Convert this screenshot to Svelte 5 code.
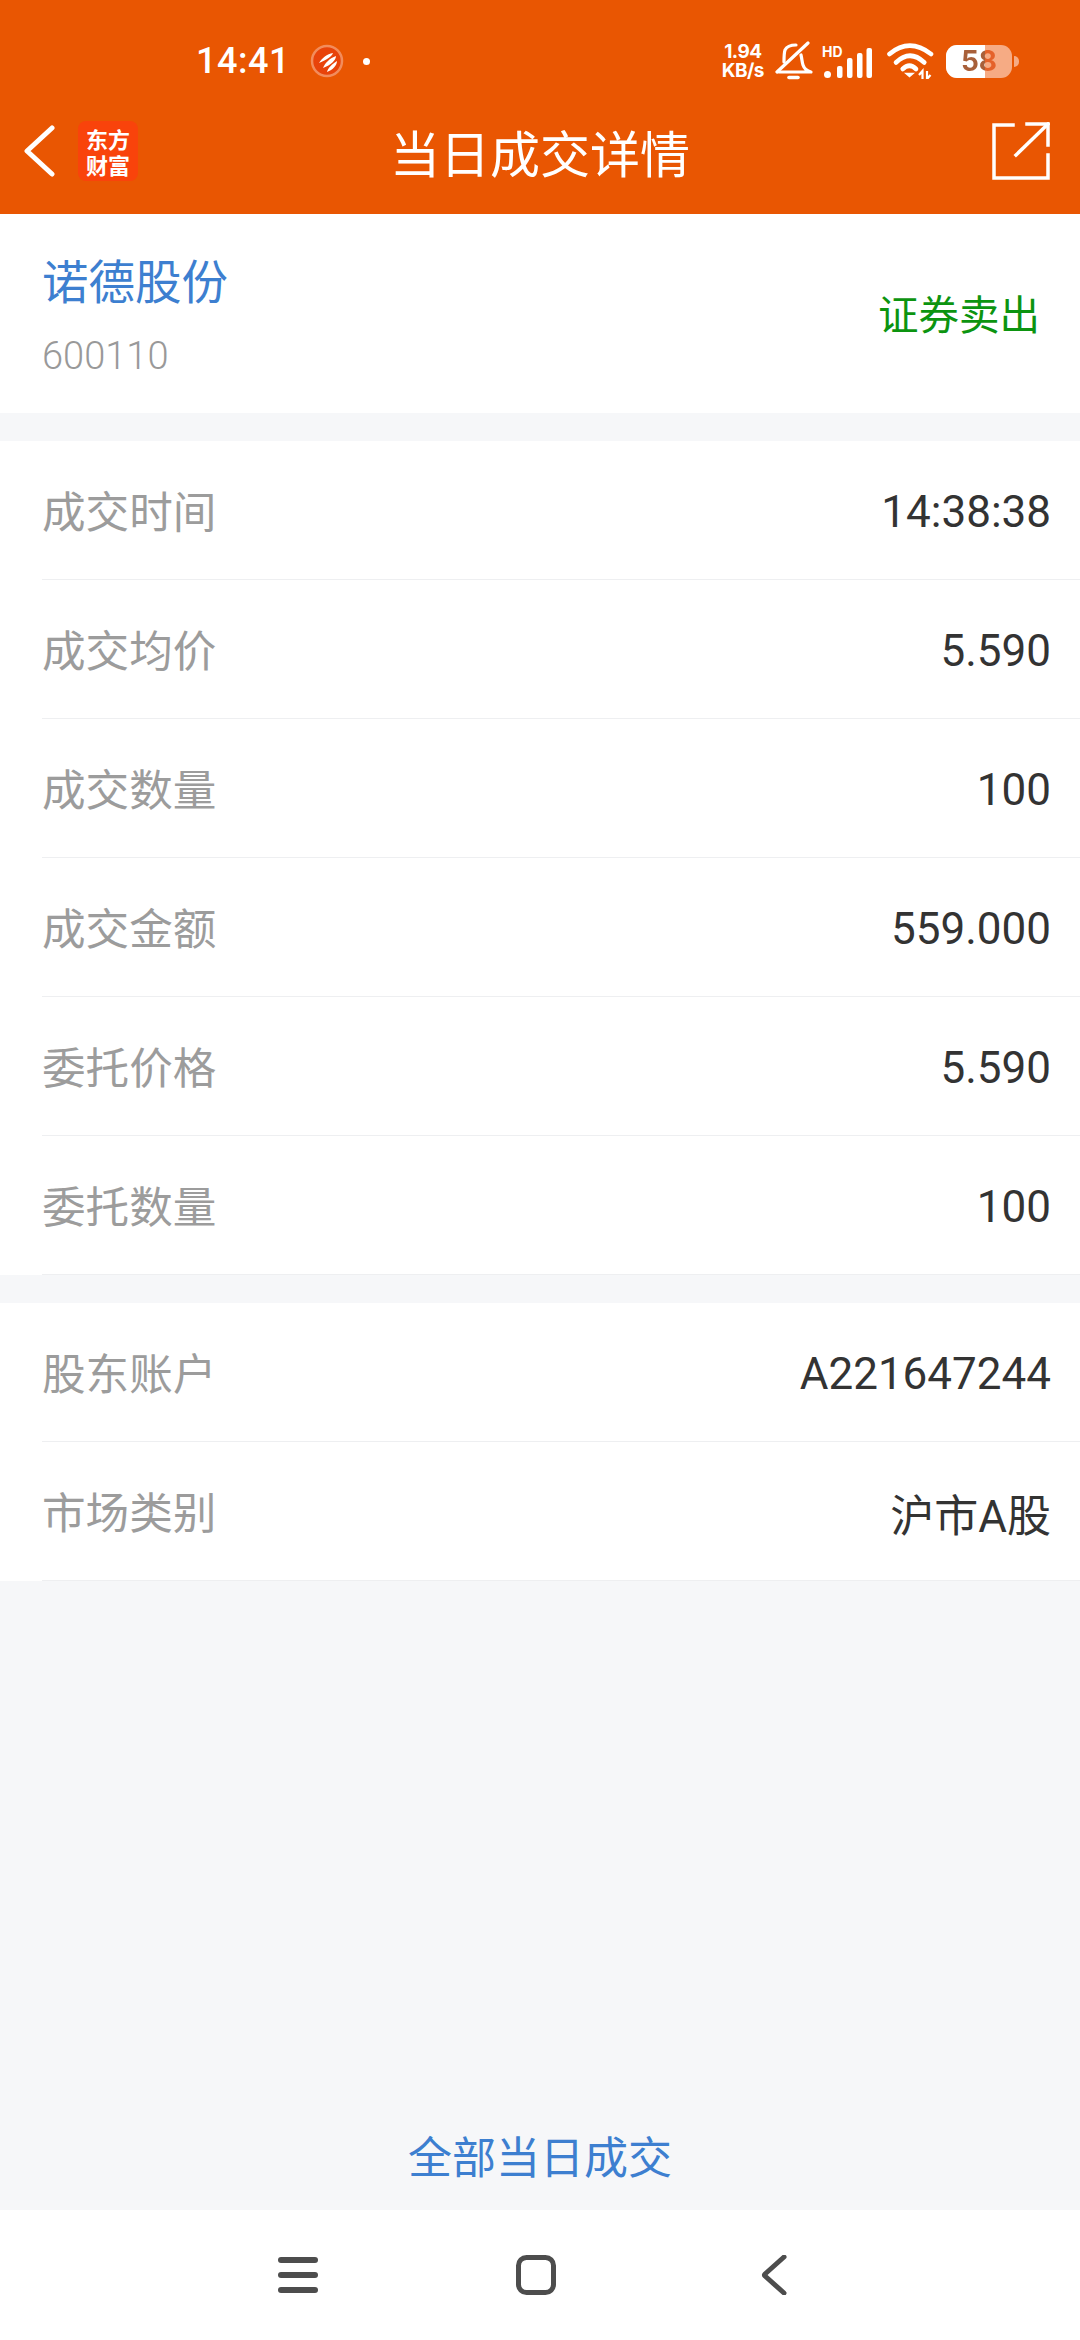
<script>
    // Rows
    let tradeRows = [
        { label: "成交时间", value: "14:38:38" },
        { label: "成交均价", value: "5.590" },
        { label: "成交数量", value: "100" },
        { label: "成交金额", value: "559.000" },
        { label: "委托价格", value: "5.590" },
        { label: "委托数量", value: "100" }
    ];
    let accountRows = [
        { label: "股东账户", value: "A221647244" },
        { label: "市场类别", value: "沪市A股" }
    ];
</script>

<div class="page">
    <!-- Header -->
    <header>
        <div class="status">
            <div class="status-left">
                <span class="clock">14:41</span>
                <svg class="app-dot" viewBox="0 0 34 34">
                    <circle cx="17" cy="17" r="15" fill="#e8430a" stroke="#f28c5c" stroke-width="2.5" />
                    <path d="M9 19 C12 14 17 10 23 9 C22 12 17 16 9 19Z M13 24 C15 19 20 14 26 12 C26 16 21 21 13 24Z M17 28 C18 24 22 20 27 17 C27 21 23 26 17 28Z" fill="#fff" />
                </svg>
                <span class="tiny-dot"></span>
            </div>
            <div class="status-right">
                <span class="speed">1.94<br />KB/s</span>
                <svg class="bell" viewBox="0 0 40 40" fill="none" stroke="#fff" stroke-width="3.2" stroke-linecap="round" stroke-linejoin="round">
                    <path d="M10 21 C10 16 10 12 11 9 C13 5 18 4 22 4" />
                    <path d="M27 14 C28 18 28 21 29 24 C30 27 33 30 37 31 H5" />
                    <path d="M3 31 L34 2" />
                    <path d="M15 36.5 H24" stroke-width="3.6" />
                </svg>
                <div class="signal">
                    <span class="hd">HD</span>
                    <svg viewBox="0 0 49 30" fill="#fff">
                        <rect x="0" y="23" width="7" height="7" rx="3.5" />
                        <rect x="13" y="18" width="5.5" height="12" rx="2" />
                        <rect x="23" y="10" width="5.5" height="20" rx="2" />
                        <rect x="33" y="5" width="5.5" height="25" rx="2" />
                        <rect x="42.5" y="0" width="5.5" height="30" rx="2" />
                    </svg>
                </div>
                <svg class="wifi" viewBox="0 0 48 36" fill="none" stroke="#fff" stroke-width="4.6" stroke-linecap="round">
                    <path d="M3.5 11 Q23.5 -5.6 45 11" />
                    <path d="M10 19.5 Q24 6 38.3 19.5" />
                    <path d="M16.7 26 Q23.5 19.5 30 26" />
                    <path d="M20 30.5 H27 L23.5 33.5 Z" fill="#fff" stroke-width="1.5" />
                    <path d="M33 32 L36.5 28 V36 M41 28 V36 L44.5 32" stroke-width="2.2" stroke-linecap="butt" />
                </svg>
                <div class="battery">
                    <span class="battery-fill"></span>
                    <span class="battery-num">58</span>
                    <span class="battery-tip"></span>
                </div>
            </div>
        </div>
        <div class="navbar">
            <div class="nav-left">
                <svg class="back" viewBox="0 0 32 52" fill="none" stroke="#fff" stroke-width="5" stroke-linecap="round" stroke-linejoin="round">
                    <path d="M28 3 L3 26 L28 49" />
                </svg>
                <div class="logo"><span>东方</span><span>财富</span></div>
            </div>
            <h1>当日成交详情</h1>
            <svg class="share" viewBox="0 0 58 58" fill="none" stroke="#fff" stroke-width="3.5" stroke-linecap="square">
                <path d="M21 3 H2 V56 H56 V33" />
                <path d="M35 2 H56 V23" />
                <path d="M56 2 L24 33" />
            </svg>
        </div>
    </header>

    <!-- Stock -->
    <section class="stock">
        <div class="stock-info">
            <div class="stock-name">诺德股份</div>
            <div class="stock-code">600110</div>
        </div>
        <div class="stock-side">证券卖出</div>
    </section>

    <section class="group">
        {#each tradeRows as row}
            <div class="row">
                <span class="label">{row.label}</span>
                <span class="value">{row.value}</span>
            </div>
        {/each}
    </section>

    <section class="group">
        {#each accountRows as row}
            <div class="row">
                <span class="label">{row.label}</span>
                <span class="value">{row.value}</span>
            </div>
        {/each}
    </section>

    <div class="all-link">全部当日成交</div>

    <!-- System nav -->
    <nav>
        <svg viewBox="0 0 40 40" fill="#4d4d4d">
            <rect x="0" y="2" width="40" height="6" rx="3" />
            <rect x="0" y="17" width="40" height="6" rx="3" />
            <rect x="0" y="32" width="40" height="6" rx="3" />
        </svg>
        <svg viewBox="0 0 40 40" fill="none" stroke="#4d4d4d" stroke-width="5">
            <rect x="2.5" y="2.5" width="35" height="35" rx="8" />
        </svg>
        <svg viewBox="0 0 40 40" fill="none" stroke="#4d4d4d" stroke-width="5" stroke-linecap="round" stroke-linejoin="round">
            <path d="M30 2 L11 19 Q10 20 11 21 L30 38" />
        </svg>
    </nav>
</div>

<style>
    :global(body) {
        margin: 0;
    }
    .page {
        /* Display */
        display: flex;
        flex-direction: column;
        /* Sizing */
        width: 1080px;
        height: 2340px;
        /* Rest */
        background: #f6f7f9;
        font-family: "Noto Sans CJK SC", "Noto Sans", sans-serif;
        overflow: hidden;
    }
    header {
        height: 214px;
        background: #e95602;
        color: #fff;
    }
    .status {
        display: flex;
        align-items: center;
        justify-content: space-between;
        height: 104px;
        padding: 18px 68px 0 196px;
        box-sizing: border-box;
    }
    .status-left,
    .status-right {
        display: flex;
        align-items: center;
    }
    .clock {
        font-family: Roboto, sans-serif;
        font-size: 36px;
        font-weight: 500;
        letter-spacing: 0.5px;
    }
    .app-dot {
        width: 34px;
        height: 34px;
        margin-left: 20px;
    }
    .tiny-dot {
        width: 7px;
        height: 7px;
        margin-left: 19px;
        border-radius: 50%;
        background: #fff;
    }
    .speed {
        font-family: Inter, sans-serif;
        font-size: 19px;
        font-weight: 700;
        line-height: 19px;
        letter-spacing: -0.5px;
        text-align: center;
    }
    .bell {
        width: 40px;
        height: 40px;
        margin-left: 10px;
    }
    .signal {
        position: relative;
        width: 51px;
        height: 34px;
        margin-left: 8px;
    }
    .signal svg {
        position: absolute;
        right: 0;
        bottom: 0;
        width: 49px;
        height: 30px;
    }
    .hd {
        position: absolute;
        top: -1px;
        left: 0;
        font-family: Inter, sans-serif;
        font-size: 14px;
        font-weight: 700;
        line-height: 18px;
    }
    .wifi {
        width: 48px;
        height: 36px;
        margin-left: 13px;
    }
    .battery {
        position: relative;
        width: 66px;
        height: 33px;
        margin-left: 12px;
        border-radius: 11px;
        background: #f6ab84;
    }
    .battery-fill {
        position: absolute;
        inset: 0 27px 0 0;
        border-radius: 11px 0 0 11px;
        background: #fff;
    }
    .battery-num {
        position: absolute;
        inset: 0;
        font-family: Inter, sans-serif;
        font-size: 28px;
        font-weight: 700;
        line-height: 33px;
        text-align: center;
        color: transparent;
        background: linear-gradient(90deg, #a8603a 0 39px, #e5622a 39px);
        background-clip: text;
        -webkit-background-clip: text;
    }
    .battery-tip {
        position: absolute;
        top: 11px;
        right: -7px;
        width: 5px;
        height: 11px;
        border-radius: 0 5px 5px 0;
        background: #f6ab84;
    }
    .navbar {
        position: relative;
        display: flex;
        align-items: center;
        justify-content: space-between;
        height: 94px;
        padding: 0 30px 0 24px;
    }
    .nav-left {
        display: flex;
        align-items: center;
    }
    .back {
        width: 32px;
        height: 52px;
    }
    .logo {
        display: flex;
        flex-direction: column;
        align-items: center;
        justify-content: center;
        width: 60px;
        height: 60px;
        margin-left: 22px;
        border-radius: 8px;
        background: #f9430b;
        font-size: 22px;
        font-weight: 700;
        line-height: 26px;
    }
    h1 {
        position: absolute;
        left: 200px;
        right: 200px;
        margin: 0;
        font-size: 50px;
        font-weight: 400;
        text-align: center;
    }
    .share {
        width: 58px;
        height: 58px;
    }
    .stock {
        display: flex;
        align-items: center;
        justify-content: space-between;
        height: 199px;
        padding: 0 42px;
        box-sizing: border-box;
        background: #fff;
    }
    .stock-info {
        padding-bottom: 1px;
    }
    .stock-name {
        font-size: 46.5px;
        line-height: 62px;
        color: #3d7fd0;
    }
    .stock-code {
        margin-top: 23px;
        font-family: Roboto, sans-serif;
        font-size: 38px;
        font-weight: 300;
        line-height: 46px;
        color: #999;
    }
    .stock-side {
        margin-right: -2px;
        padding-bottom: 3px;
        font-size: 40.5px;
        color: #0c9410;
    }
    .group {
        margin-top: 28px;
        background: #fff;
    }
    .row {
        display: flex;
        align-items: center;
        justify-content: space-between;
        height: 139px;
        margin-left: 42px;
        padding-right: 29px;
        box-sizing: border-box;
        border-bottom: 1px solid #eeeff1;
    }
    .label {
        padding-bottom: 3px;
        font-size: 43.6px;
        color: #9c9c9c;
    }
    .value {
        padding-top: 3px;
        font-family: Roboto, "Noto Sans CJK SC", sans-serif;
        font-size: 44px;
        color: #333;
    }
    .all-link {
        margin-top: auto;
        height: 110px;
        line-height: 110px;
        font-size: 44px;
        text-align: center;
        color: #3d7fd0;
    }
    nav {
        display: flex;
        align-items: center;
        justify-content: center;
        gap: 198px;
        height: 130px;
        padding-right: 8px;
        background: #fff;
    }
    nav svg {
        width: 40px;
        height: 40px;
    }
</style>
